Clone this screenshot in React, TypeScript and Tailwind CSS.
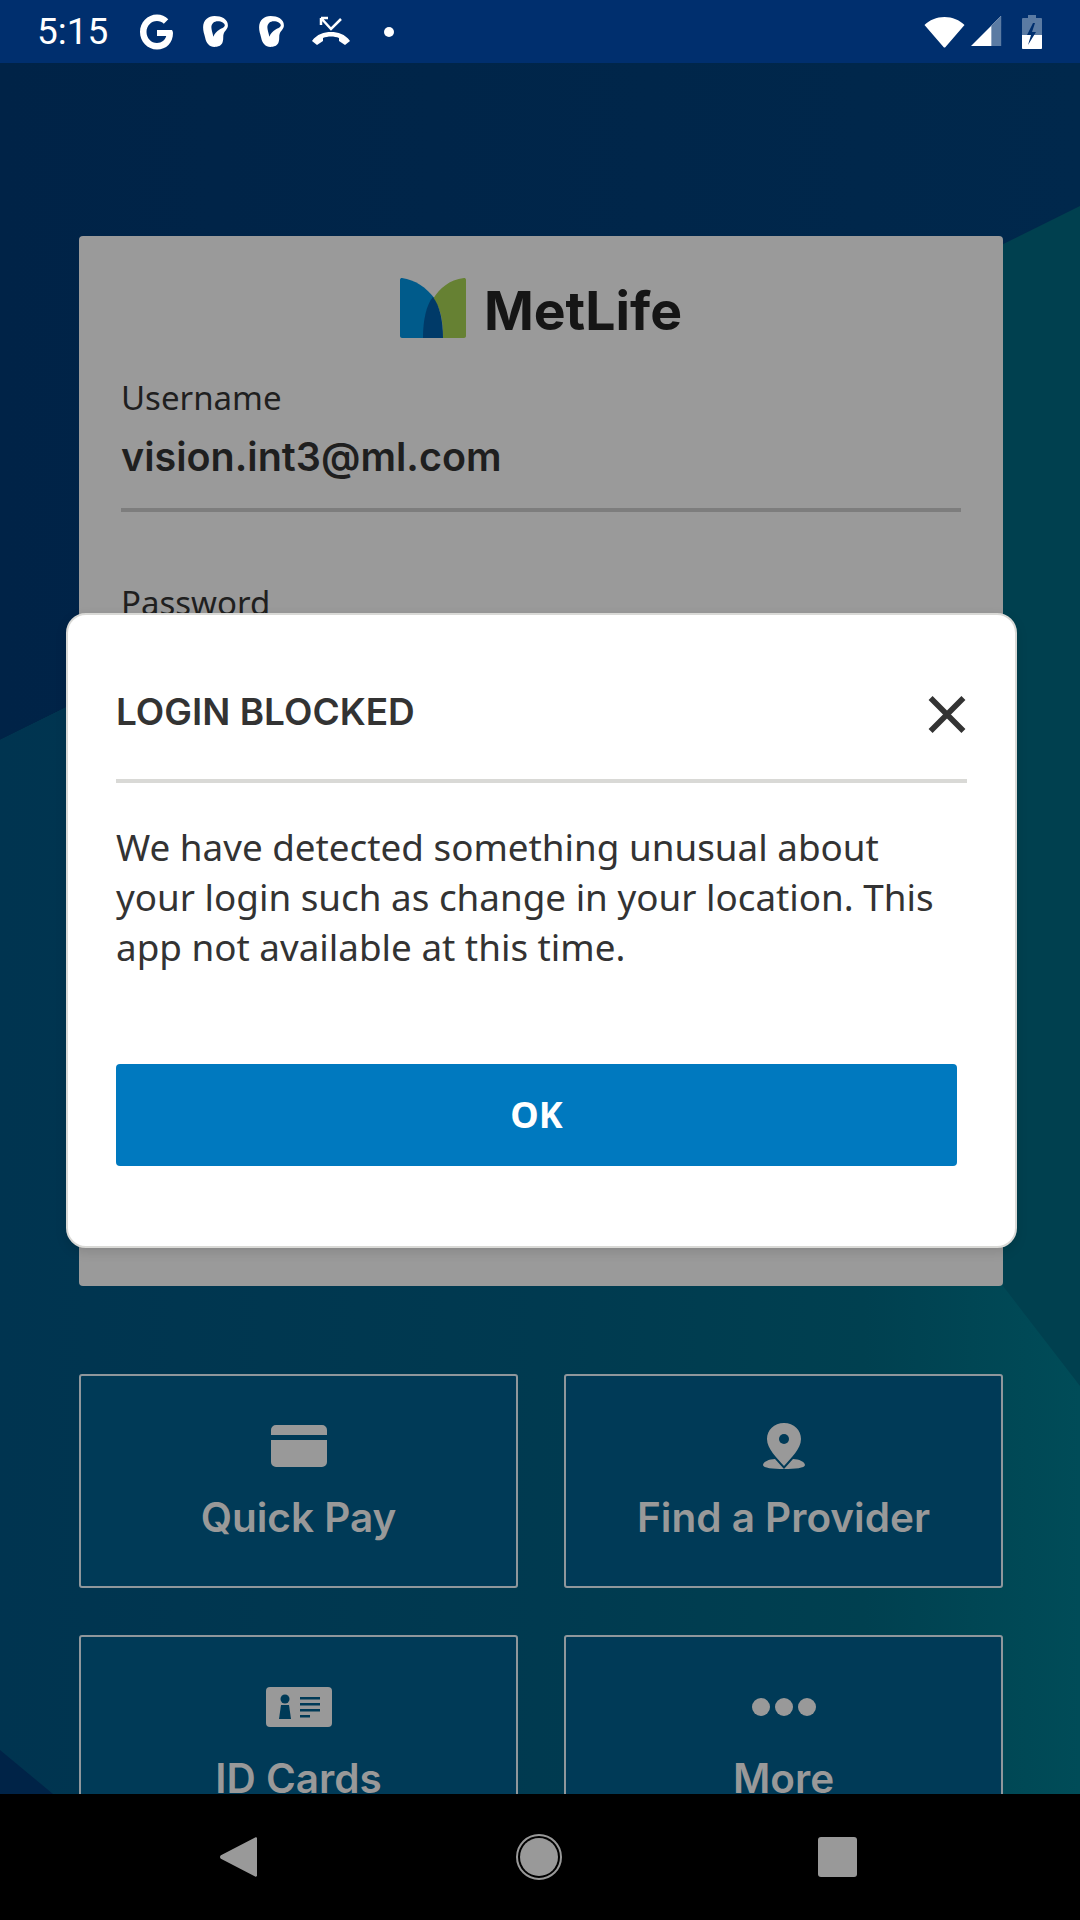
import React from "react";

function Tile({ label, icon }: { label: string; icon: React.ReactNode }) {
  return (
    <div className="h-[214px] rounded-[3px] border-2 border-[#8f979c] bg-[#003a57] flex flex-col items-center pt-[47px]">
      <div className="h-[46px] flex items-center justify-center">{icon}</div>
      <div className="mt-[24px] text-[40.5px] leading-[50px] font-semibold text-[#999999] font-['Inter',sans-serif]">{label}</div>
    </div>
  );
}

function Ear({ className }: { className: string }) {
  return (
    <svg className={className} width="25" height="31" viewBox="0 0 24 30">
      <path d="M11 0C18 0 24 3 24 9C24 13 21 14 20 17C19 19 20 22 19 25C18 29 14 30 11 30C6 30 3 26 2 21C1 17 0 15 0 11C0 4 5 0 11 0z" fill="#fff" />
      <path d="M14 5C18 5 21 7 21 9C21 11 18 12 16 13C13 15 11 17 10 20C9 16 8 13 8 11C8 7 11 5 14 5z" fill="#002f6e" />
    </svg>
  );
}

export default function App() {
  return (
    <div className="w-[1080px] h-[1920px] flex flex-col overflow-hidden bg-black font-['Noto_Sans','Open_Sans',sans-serif]">
      {/* status bar */}
      <div className="h-[63px] shrink-0 bg-[#002f6e] flex items-center pl-[37px] pr-[38px] text-white relative z-10">
        <span className="text-[37px] leading-none font-['Roboto',sans-serif] font-normal">5:15</span>
        <svg className="ml-[31px]" width="36" height="38" viewBox="0 0 36 38">
          <path d="M33 17H18v6h9.200c-1 4-4.500 7-9.200 7-5.800 0-10.500-4.900-10.500-11S12.200 8 18 8c2.800 0 5 1 6.800 2.700l4.500-4.500C26.300 3.300 22.500 1.500 18 1.500 8.400 1.500 1 9.400 1 19s7.400 17.500 17 17.500c9.300 0 16-6.500 16-16.500 0-1-.4-2-1-3z" fill="#fff" />
        </svg>
        <Ear className="ml-[28px]" />
        <Ear className="ml-[31px]" />
        <svg className="ml-[27px]" width="40" height="32" viewBox="0 0 40 32">
          <path d="M10 2l10 11L30 3M10 2v7M10 2h7" stroke="#fff" strokeWidth="2.500" fill="none" />
          <path d="M1 25c5-7 12-9 19-9s14 2 19 9l-5 4-6-4v-3c-5-2-11-2-16 0v3l-6 4z" fill="#fff" />
        </svg>
        <div className="ml-[33px] w-[10px] h-[10px] rounded-full bg-white" />
        <div className="flex-1" />
        <svg width="41" height="32" viewBox="0 0 40 32">
          <path d="M0 9C5 4 12 1 20 1s15 3 20 8L21 31c-.6.800-1.400.800-2 0z" fill="#fff" />
        </svg>
        <svg className="ml-[6px]" width="31" height="31" viewBox="0 0 32 32">
          <path d="M0 31L31 0v31z" fill="#fff" />
          <path d="M21 10L31 0v31H21z" fill="#5b7ba3" />
        </svg>
        <svg className="ml-[20px]" width="20" height="34" viewBox="0 0 20 34">
          <path d="M6 0h8v3h5a1 1 0 011 1v29a1 1 0 01-1 1H1a1 1 0 01-1-1V4a1 1 0 011-1h5z" fill="#5b7ba3" />
          <path d="M0 20h20v13a1 1 0 01-1 1H1a1 1 0 01-1-1z" fill="#fff" />
          <path d="M11 8L5 20h4l-3 10 8-13h-4l3-9z" fill="#002f6e" />
        </svg>
      </div>

      {/* content */}
      <div className="flex-1 relative overflow-hidden bg-[linear-gradient(90deg,#002347_0%,#00284c_100%)] pl-[79px] pr-[77px] pt-[173px]">
        <svg className="absolute inset-0 w-full h-full" viewBox="0 0 1080 1731" preserveAspectRatio="none">
          <defs>
            <linearGradient id="teal" gradientUnits="userSpaceOnUse" x1="0" y1="0" x2="1080" y2="0">
              <stop offset="0" stopColor="#003450" />
              <stop offset="0.5" stopColor="#003a50" />
              <stop offset="0.8" stopColor="#004050" />
              <stop offset="1" stopColor="#004c58" />
            </linearGradient>
          </defs>
          <polygon points="0,677 1080,143 1080,1731 0,1731" fill="#00404f" />
          <polygon points="0,677 1003,181 1003,1223 1080,1323 1080,1731 0,1731" fill="url(#teal)" />
          <polygon points="0,1687 53,1731 0,1731" fill="#002347" />
        </svg>

        <div className="relative">
          {/* login card */}
          <div className="h-[1050px] rounded-[4px] bg-[#9a9a9a] px-[42px] pt-[42px]">
            <div className="flex items-center justify-center gap-[18px] h-[60px]">
              <svg width="66" height="60" viewBox="0 0 66 60">
                <path d="M0 2C0 .5 1 0 2 0c13 2 24 9 33 21v39H2c-1 0-2-1-2-2z" fill="#005b8b" />
                <path d="M66 2c0-1.500-1-2-2-2C49 2 40 10 33 21c8 9 10 22 10 39h21c1 0 2-1 2-2z" fill="#668133" />
                <path d="M33 19c-7 8-10 24-10 41h20c0-17-3-32-10-41z" fill="#003a68" />
              </svg>
              <span className="mt-[6px] text-[53.5px] leading-none font-bold text-[#151515] font-['Inter',sans-serif]">MetLife</span>
            </div>
            <div className="mt-[39px] text-[33px] leading-[42px] text-[#1f1f1f]">Username</div>
            <div className="mt-[13px] text-[39.5px] leading-[50px] font-semibold text-[#1f1f1f] font-['Inter',sans-serif]">vision.int3@ml.com</div>
            <div className="mt-[26px] h-[4px] bg-[#7d7d7d]" />
            <div className="mt-[70px] text-[33px] leading-[42px] text-[#1f1f1f]">Password</div>
          </div>

          {/* tiles */}
          <div className="mt-[88px] grid grid-cols-2 gap-x-[46px] gap-y-[47px]">
            <Tile
              label="Quick Pay"
              icon={
                <svg width="56" height="42" viewBox="0 0 56 42">
                  <path d="M0 10V5a5 5 0 015-5h46a5 5 0 015 5v5zM0 15h56v22a5 5 0 01-5 5H5a5 5 0 01-5-5z" fill="#999" />
                </svg>
              }
            />
            <Tile
              label="Find a Provider"
              icon={
                <svg width="42" height="46" viewBox="0 0 42 46">
                  <path d="M21 0C11 0 4 7 4 16c0 10 10 19 17 27 7-8 17-17 17-27C38 7 31 0 21 0z" fill="#999" />
                  <circle cx="21" cy="16" r="5" fill="#003a57" />
                  <path d="M0 42c0-3 6-6 12-6l9 10C10 46 0 45 0 42zM42 42c0-3-6-6-12-6l-9 10c11 0 21-1 21-4z" fill="#999" />
                </svg>
              }
            />
            <Tile
              label="ID Cards"
              icon={
                <svg width="66" height="40" viewBox="0 0 66 40">
                  <rect width="66" height="40" rx="4" fill="#999" />
                  <circle cx="19" cy="12" r="4.500" fill="#003a57" />
                  <path d="M15 18h8l2 14H13z" fill="#003a57" />
                  <path d="M34 10h20v2.500H34zM34 16h20v2.500H34zM34 22h20v2.500H34zM34 28h10v2.500H34z" fill="#003a57" />
                </svg>
              }
            />
            <Tile
              label="More"
              icon={
                <div className="flex gap-[5px]">
                  <div className="w-[18px] h-[18px] rounded-full bg-[#999999]" />
                  <div className="w-[18px] h-[18px] rounded-full bg-[#999999]" />
                  <div className="w-[18px] h-[18px] rounded-full bg-[#999999]" />
                </div>
              }
            />
          </div>

          {/* dialog */}
          <div className="absolute left-[-13px] top-[377px] w-[951px] h-[635px] rounded-[20px] bg-white border-2 border-[#d9d9d6] shadow-[0_4px_12px_rgba(0,0,0,0.12)] px-[48px]">
            <div className="flex items-center justify-between h-[168px] pt-[28px] border-b-4 border-[#d9d9d6]">
              <span className="text-[37px] leading-none font-semibold text-[#333333] font-['Inter',sans-serif]">LOGIN BLOCKED</span>
              <svg className="mt-[6px]" width="40" height="39" viewBox="0 0 38 38">
                <path d="M3 3l32 32M35 3L3 35" stroke="#333" strokeWidth="5.500" />
              </svg>
            </div>
            <p className="mt-[39px] w-[841px] text-[36.8px] leading-[50px] text-[#333333]">
              We have detected something unusual about your login such as change in your location. This app not available at this time.
            </p>
            <div className="mt-[92px] w-[841px] h-[102px] rounded-[4px] bg-[#0079bf] flex items-center justify-center text-[36px] font-bold text-white">OK</div>
          </div>
        </div>
      </div>

      {/* nav bar */}
      <div className="h-[126px] shrink-0 bg-black flex items-center justify-center pr-[3px] relative z-10">
        <svg width="37" height="42" viewBox="0 0 40 44">
          <path d="M38 1c1-.6 2 0 2 1v40c0 1-1 1.600-2 1L1 24c-1.300-1-1.300-3 0-4z" fill="#999" />
        </svg>
        <div className="ml-[259px] w-[46px] h-[46px] rounded-full border-2 border-[#999999] p-[2px]">
          <div className="w-full h-full rounded-full bg-[#999999]" />
        </div>
        <div className="ml-[256px] w-[39px] h-[40px] rounded-[3px] bg-[#999999]" />
      </div>
    </div>
  );
}
